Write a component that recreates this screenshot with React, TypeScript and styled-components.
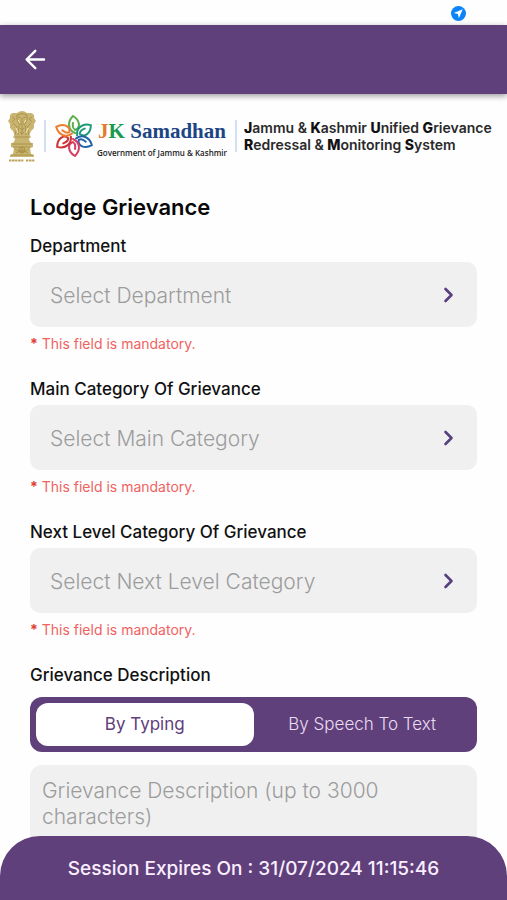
import React, { useState } from "react";
import styled, { createGlobalStyle } from "styled-components";

const purple = "#5f407b";

const GlobalStyle = createGlobalStyle`
  *, *::before, *::after { box-sizing: border-box; }
  html { scrollbar-width: none; }
  body { margin: 0; background: #fefefe; }
  body, button, select, textarea { font-family: Inter, "Liberation Sans", sans-serif; }
`;

const Screen = styled.div`
  min-height: 100vh;
  display: flex;
  flex-direction: column;
`;

const StatusBar = styled.div`
  height: 25px;
  padding: 1px 41px 0 0;
  display: flex;
  align-items: center;
  justify-content: flex-end;
`;

const AppBar = styled.header`
  height: 69px;
  padding: 0 20px;
  display: flex;
  align-items: center;
  background: ${purple};
  box-shadow: 0 2px 6px rgba(0, 0, 0, 0.4);
`;

const BackButton = styled.button`
  display: flex;
  padding: 4px;
  border: 0;
  background: none;
  color: #fff;
  cursor: pointer;
`;

const BrandRow = styled.section`
  height: 84px;
  padding: 0 8px;
  display: flex;
  align-items: center;

  > svg { flex: none; }
`;

const Divider = styled.span`
  width: 2px;
  height: 32px;
  margin: 0 7px 0 8px;
  flex: none;
  background: #d3e0f3;
`;

const Wordmark = styled.div`
  margin-left: 2px;
  display: flex;
  flex-direction: column;
  flex: none;
  align-items: center;
  white-space: nowrap;
`;

const WordmarkName = styled.div`
  font: bold 21px/34px "Liberation Serif", serif;
  color: #1d4585;
`;

const Tint = styled.span<{ $color: string }>`
  color: ${(p) => p.$color};
`;

const WordmarkTagline = styled.div`
  font: 600 8px/10px "Open Sans", sans-serif;
  color: #222;
`;

const SystemName = styled.p`
  margin: 0;
  flex: 1;
  font-size: 14px;
  line-height: 17px;
  font-weight: 600;
  color: #2a2a2a;
  white-space: nowrap;

  b { font-weight: 800; color: #111; }
`;

const Form = styled.form`
  flex: 1;
  padding: 15px 30px 0;
  display: flex;
  flex-direction: column;
`;

const Title = styled.h1`
  margin: 0 0 15px;
  font-size: 22px;
  line-height: 28px;
  font-weight: 600;
  color: #080808;
`;

const Field = styled.div`
  margin-bottom: 26px;
  display: flex;
  flex-direction: column;
`;

const Label = styled.label`
  margin-bottom: 6px;
  font-size: 17px;
  line-height: 20px;
  font-weight: 500;
  color: #111;
`;

const SelectBox = styled.div`
  display: grid;
  align-items: center;

  > * { grid-area: 1 / 1; }
  > svg { justify-self: end; margin-right: 17px; pointer-events: none; }
`;

const Select = styled.select`
  appearance: none;
  width: 100%;
  height: 65px;
  padding: 2px 48px 0 20px;
  border: 0;
  border-radius: 10px;
  background: #f0f0f0;
  color: #9c9c9c;
  font-size: 21px;
  font-weight: 300;
`;

const ErrorText = styled.p`
  margin: 8px 0 0;
  font-size: 14px;
  line-height: 18px;
  color: #f0625f;

  b { color: #e23b34; }
`;

const DescriptionField = styled.div`
  display: flex;
  flex-direction: column;
`;

const Segments = styled.div`
  height: 55px;
  margin: 6px 0 13px;
  padding: 6px;
  display: grid;
  grid-template-columns: 1fr 1fr;
  border-radius: 12px;
  background: ${purple};
`;

const Segment = styled.button<{ $active: boolean }>`
  padding: 0 0 2px;
  border: 0;
  border-radius: 12px;
  background: ${(p) => (p.$active ? "#fff" : "transparent")};
  color: ${(p) => (p.$active ? purple : "#eadcf2")};
  font-size: 17px;
  font-weight: ${(p) => (p.$active ? 400 : 300)};
  cursor: pointer;
`;

const DescriptionInput = styled.textarea`
  height: 111px;
  padding: 13px 12px;
  border: 0;
  border-radius: 12px;
  background: #f0f0f0;
  font-size: 21px;
  font-weight: 300;
  line-height: 26px;
  resize: none;

  &::placeholder { color: #9c9c9c; opacity: 1; }
`;

const SessionBar = styled.footer`
  position: sticky;
  bottom: 0;
  height: 64px;
  margin-top: -40px;
  flex: none;
  display: flex;
  align-items: center;
  justify-content: center;
  border-radius: 40px 40px 0 0;
  background: ${purple};
  color: #fbeeff;
  font-size: 19px;
  font-weight: 500;
`;

const LocationBadge = () => (
  <svg width="15" height="15" viewBox="0 0 15 15" role="img" aria-label="Location in use">
    <circle cx="7.5" cy="7.5" r="7.5" fill="#0b84fb" />
    <path d="M11.7 3.3 2.8 7l4.1 1.1 1 4.1z" fill="#fff" />
  </svg>
);

const BackArrow = () => (
  <svg width="23" height="23" viewBox="0 0 23 23" fill="none" stroke="currentColor" strokeWidth="2.4" strokeLinecap="round" strokeLinejoin="round">
    <path d="M20 11.5H2.8M11.3 2.8 2.6 11.5l8.7 8.7" />
  </svg>
);

const Chevron = () => (
  <svg width="24" height="24" viewBox="0 0 24 24" fill="none" stroke="#57407f" strokeWidth="2.6" strokeLinecap="round" strokeLinejoin="round">
    <path d="m9.5 6 6 6-6 6" />
  </svg>
);

const Emblem = () => (
  <svg width="28" height="53" viewBox="0 0 28 53" role="img" aria-label="State emblem of India">
    <g fill="#c9b571">
      <path d="M9 3q5-4 10 0l4 0q4 1 3 5l2 3-2 3 0 4-3 3-2 5H7l-2-5-3-3 0-4-2-3 2-3q-1-4 3-5z" />
      <path d="M6 25h16l-1 5 2 3H5l2-3z" />
      <path d="M3 33h22v4l-3 1 1 6 3 1v2H2v-2l3-1 1-6-3-1z" />
    </g>
    <g fill="none" stroke="#a58d42" strokeWidth=".8">
      <path d="M9 5q5-3 10 0v5l-2 4h-6l-2-4zM10 7l3 1M18 7l-3 1M14 8v3M12 12h4M4 7l3 2-3 3M24 7l-3 2 3 3M5 13l4 4-2 8M23 13l-4 4 2 8M11 15l-1 10M17 15l1 10M14 15v10M12 18l2 2 2-2M12 22l2 2 2-2" />
      <path d="M5 27h18M4 34h20M5 37h18M3 45h22M7 39q7 6 14 0M8 43q6-4 12 0" />
      <circle cx="14" cy="40" r="3" />
      <path d="M14 37v6M11 40h6" />
    </g>
    <path d="m10 10 2 3M18 10l-2 3M8 18l2 5M20 18l-2 5" stroke="#f4e9b8" fill="none" />
    <path d="M1 50.5h15M18 50.5h9" stroke="#bda45a" strokeWidth="2.2" strokeDasharray="2 .6 3 .5" />
  </svg>
);

const petals: [number, string][] = [
  [0, "#58ae49"],
  [60, "#1d9a7b"],
  [120, "#2363a5"],
  [180, "#d63e62"],
  [240, "#cc3438"],
  [300, "#ee7c31"],
];

const Flower = () => (
  <svg width="42" height="42" viewBox="-21 -21 42 42" role="img" aria-label="JK Samadhan logo">
    {petals.map(([angle, color]) => (
      <g key={angle} transform={`rotate(${angle})`} fill="none" stroke={color} strokeLinecap="round">
        <path d="M1-3C-6-6-7-14-1-20C6-16 7-8 1-6Q-2-8-1-13" strokeWidth="2" />
      </g>
    ))}
  </svg>
);

const selects = [
  { id: "department", label: "Department", placeholder: "Select Department" },
  { id: "main-category", label: "Main Category Of Grievance", placeholder: "Select Main Category" },
  { id: "next-category", label: "Next Level Category Of Grievance", placeholder: "Select Next Level Category" },
];

const inputModes = ["By Typing", "By Speech To Text"];

export default function App() {
  const [mode, setMode] = useState(inputModes[0]);

  return (
    <Screen>
      <GlobalStyle />
      <StatusBar>
        <LocationBadge />
      </StatusBar>
      <AppBar>
        <BackButton type="button" aria-label="Back">
          <BackArrow />
        </BackButton>
      </AppBar>
      <BrandRow>
        <Emblem />
        <Divider />
        <Flower />
        <Wordmark>
          <WordmarkName>
            <Tint $color="#e47b2c">J</Tint>
            <Tint $color="#189b4c">K</Tint> Samadhan
          </WordmarkName>
          <WordmarkTagline>Government of Jammu &amp; Kashmir</WordmarkTagline>
        </Wordmark>
        <Divider />
        <SystemName>
          <b>J</b>ammu &amp; <b>K</b>ashmir <b>U</b>nified <b>G</b>rievance
          <br />
          <b>R</b>edressal &amp; <b>M</b>onitoring <b>S</b>ystem
        </SystemName>
      </BrandRow>
      <Form>
        <Title>Lodge Grievance</Title>
        {selects.map((s) => (
          <Field key={s.id}>
            <Label htmlFor={s.id}>{s.label}</Label>
            <SelectBox>
              <Select id={s.id} required aria-describedby={`${s.id}-error`} defaultValue="">
                <option value="">{s.placeholder}</option>
              </Select>
              <Chevron />
            </SelectBox>
            <ErrorText id={`${s.id}-error`}>
              <b>*</b> This field is mandatory.
            </ErrorText>
          </Field>
        ))}
        <DescriptionField>
          <Label htmlFor="description">Grievance Description</Label>
          <Segments role="group" aria-label="Input method">
            {inputModes.map((m) => (
              <Segment key={m} type="button" $active={m === mode} aria-pressed={m === mode} onClick={() => setMode(m)}>
                {m}
              </Segment>
            ))}
          </Segments>
          <DescriptionInput id="description" placeholder="Grievance Description (up to 3000 characters)" />
        </DescriptionField>
      </Form>
      <SessionBar>Session Expires On : 31/07/2024 11:15:46</SessionBar>
    </Screen>
  );
}
